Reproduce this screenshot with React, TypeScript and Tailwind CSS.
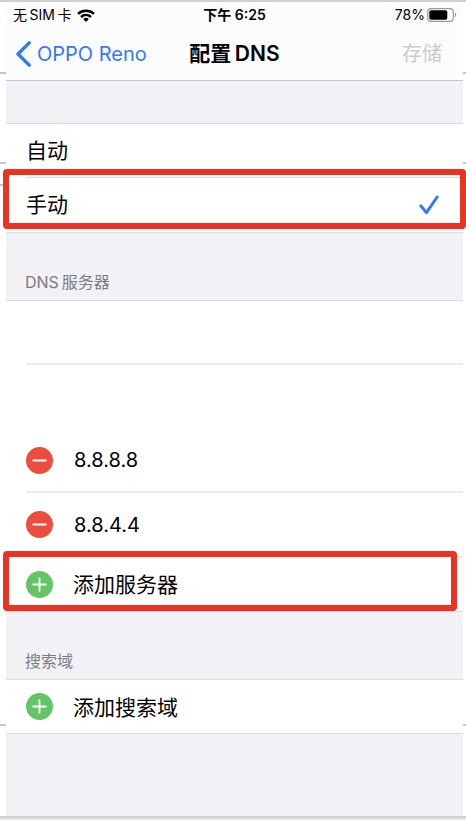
import { useState } from 'react';
import type { ReactNode } from 'react';

function WifiIcon() {
  return (
    <svg className="h-[13px] w-[18px]" viewBox="0 0 18 13" fill="none" aria-hidden="true">
      <path d="M1 4.9C5.4.8 12.6.8 17 4.9" stroke="#000" strokeWidth="2.5" />
      <path d="M4 8C6.9 5.3 11.1 5.3 14 8" stroke="#000" strokeWidth="2.4" />
      <path d="M6.2 10.1a4 4 0 0 1 5.6 0L9 12.9z" fill="#000" />
    </svg>
  );
}

function BatteryIcon() {
  return (
    <svg className="h-[14px] w-[30px]" viewBox="0 0 30 14" fill="none" aria-hidden="true">
      <rect x="0.7" y="0.7" width="25.6" height="12.6" rx="3.4" stroke="#9b9b9b" strokeWidth="1.2" />
      <rect x="2.3" y="2.3" width="18" height="9.4" rx="2" fill="#000" />
      <path d="M27.8 4.8c1.8.6 1.8 3.8 0 4.4z" fill="#9b9b9b" />
    </svg>
  );
}

function RoundSign({ kind }: { kind: 'add' | 'remove' }) {
  return (
    <svg className="size-[27px] shrink-0" viewBox="0 0 27 27" aria-hidden="true">
      <circle cx="13.5" cy="13.5" r="13.5" fill={kind === 'add' ? '#65c466' : '#eb4e3d'} />
      <path
        d={kind === 'add' ? 'M7.2 13.5h12.6M13.5 7.2v12.6' : 'M7.2 13.5h12.6'}
        stroke="#fff"
        strokeWidth="1.8"
        strokeLinecap="round"
      />
    </svg>
  );
}

function Highlight({ className }: { className: string }) {
  return (
    <div
      className={`pointer-events-none absolute z-10 rounded-[4px] border-6 border-[#ea3323] ${className}`}
    />
  );
}

function Tick({ className }: { className: string }) {
  return <div className={`absolute h-0.5 bg-[#c6c6c6] ${className}`} />;
}

function Option({
  label,
  checked,
  onSelect,
}: {
  label: string;
  checked: boolean;
  onSelect: () => void;
}) {
  return (
    <label className="flex h-full cursor-pointer items-center justify-between pr-6">
      <span>{label}</span>
      <input
        type="radio"
        name="mode"
        className="sr-only"
        checked={checked}
        onChange={onSelect}
      />
      {checked && (
        <svg className="h-5 w-5" viewBox="0 0 20 20" fill="none" aria-hidden="true">
          <path
            d="M1.8 10.8 7.4 17.6 18.2 2"
            stroke="#3478f6"
            strokeWidth="3"
            strokeLinecap="round"
            strokeLinejoin="round"
          />
        </svg>
      )}
    </label>
  );
}

function Server({ value, id }: { value: string; id: string }) {
  return (
    <div className="flex h-full items-center gap-[21px]">
      <button type="button" aria-label={`删除 ${value}`}>
        <RoundSign kind="remove" />
      </button>
      <input
        id={id}
        aria-label="DNS服务器"
        defaultValue={value}
        className="min-w-0 flex-1 bg-transparent text-xl outline-none"
      />
    </div>
  );
}

function AddButton({ children }: { children: ReactNode }) {
  return (
    <button type="button" className="flex h-full w-full items-center gap-5 text-left">
      <RoundSign kind="add" />
      <span className="pt-0.5">{children}</span>
    </button>
  );
}

function SectionTitle({ children }: { children: ReactNode }) {
  return (
    <h2 className="flex h-[67px] items-end pb-2 pl-[19px] text-base leading-5 text-[#7c7c81]">
      {children}
    </h2>
  );
}

export default function App() {
  const [mode, setMode] = useState('manual');

  return (
    <div className="relative flex min-h-screen flex-col border-t-2 border-[#d0d0d0] bg-white font-['Inter','Noto_Sans_CJK_SC',sans-serif] text-black">
      <Tick className="left-0 top-[70px] w-[6px]" />
      <Tick className="right-0 top-[70px] w-[3px]" />
      <Tick className="left-0 top-[160px] w-[6px]" />
      <Tick className="right-0 top-[160px] w-[3px]" />
      <Tick className="left-0 top-[182px] w-[6px]" />
      <Tick className="left-0 top-[722px] w-[6px]" />
      <Tick className="right-0 top-[722px] w-[3px]" />

      <div className="mr-[3px] ml-[6px] flex flex-1 flex-col bg-[#f2f1f6]">
        <header className="border-b border-[#c5c5ca] bg-[#fcfcfc]">
          <div className="grid h-[26px] grid-cols-[1fr_auto_1fr] items-center px-1.5 text-sm leading-5">
            <div className="flex items-center gap-1.5 pl-px">
              <span>无{'\u2009'}SIM{'\u2009'}卡</span>
              <WifiIcon />
            </div>
            <span className="font-semibold">下午 6:25</span>
            <div className="flex items-center justify-end gap-0.5">
              <span>78%</span>
              <BatteryIcon />
            </div>
          </div>
          <div className="grid h-[52px] grid-cols-[1fr_auto_1fr] items-center px-2.5 text-xl">
            <button type="button" className="flex items-center gap-1.5 text-[#3478f6]">
              <svg className="h-[26px] w-[15px]" viewBox="0 0 15 26" fill="none" aria-hidden="true">
                <path
                  d="M13.2 1.9 2 13l11.2 11.1"
                  stroke="currentColor"
                  strokeWidth="3.4"
                  strokeLinecap="round"
                  strokeLinejoin="round"
                />
              </svg>
              OPPO Reno
            </button>
            <h1 className="text-[21px] font-semibold">配置{'\u2009'}DNS</h1>
            <button type="button" disabled className="justify-self-end pr-[11px] text-[#cbcbcb]">
              存储
            </button>
          </div>
        </header>

        <main className="text-[21px]">
          <div className="mt-[42px] border-y border-[#dcdce0] bg-white pl-5">
            <div className="h-[54px] border-b border-[#dcdce0]">
              <Option label="自动" checked={mode === 'auto'} onSelect={() => setMode('auto')} />
            </div>
            <div className="relative h-[54px]">
              <Option label="手动" checked={mode === 'manual'} onSelect={() => setMode('manual')} />
              <Highlight className="-top-[9px] -right-[3px] bottom-[3px] -left-[23px]" />
            </div>
          </div>

          <SectionTitle>DNS{'\u2009'}服务器</SectionTitle>
          <div className="border-y border-[#dcdce0] bg-white pl-5">
            <div className="h-16 border-b-2 border-[#ebebec]" />
            <div className="h-16" />
            <div className="h-16 border-b-2 border-[#ebebec]">
              <Server id="server-1" value="8.8.8.8" />
            </div>
            <div className="h-16 border-b border-[#dcdce0]">
              <Server id="server-2" value="8.8.4.4" />
            </div>
            <div className="relative h-[54px]">
              <AddButton>添加服务器</AddButton>
              <Highlight className="-top-[6px] right-[6px] bottom-0 -left-[23px]" />
            </div>
          </div>

          <SectionTitle>搜索域</SectionTitle>
          <div className="h-[55px] border-y border-[#dcdce0] bg-white pl-5">
            <AddButton>添加搜索域</AddButton>
          </div>
        </main>
      </div>
      <div className="h-1 border-t-2 border-[#d0d0d0] bg-[#e3e3e3]" />
    </div>
  );
}
